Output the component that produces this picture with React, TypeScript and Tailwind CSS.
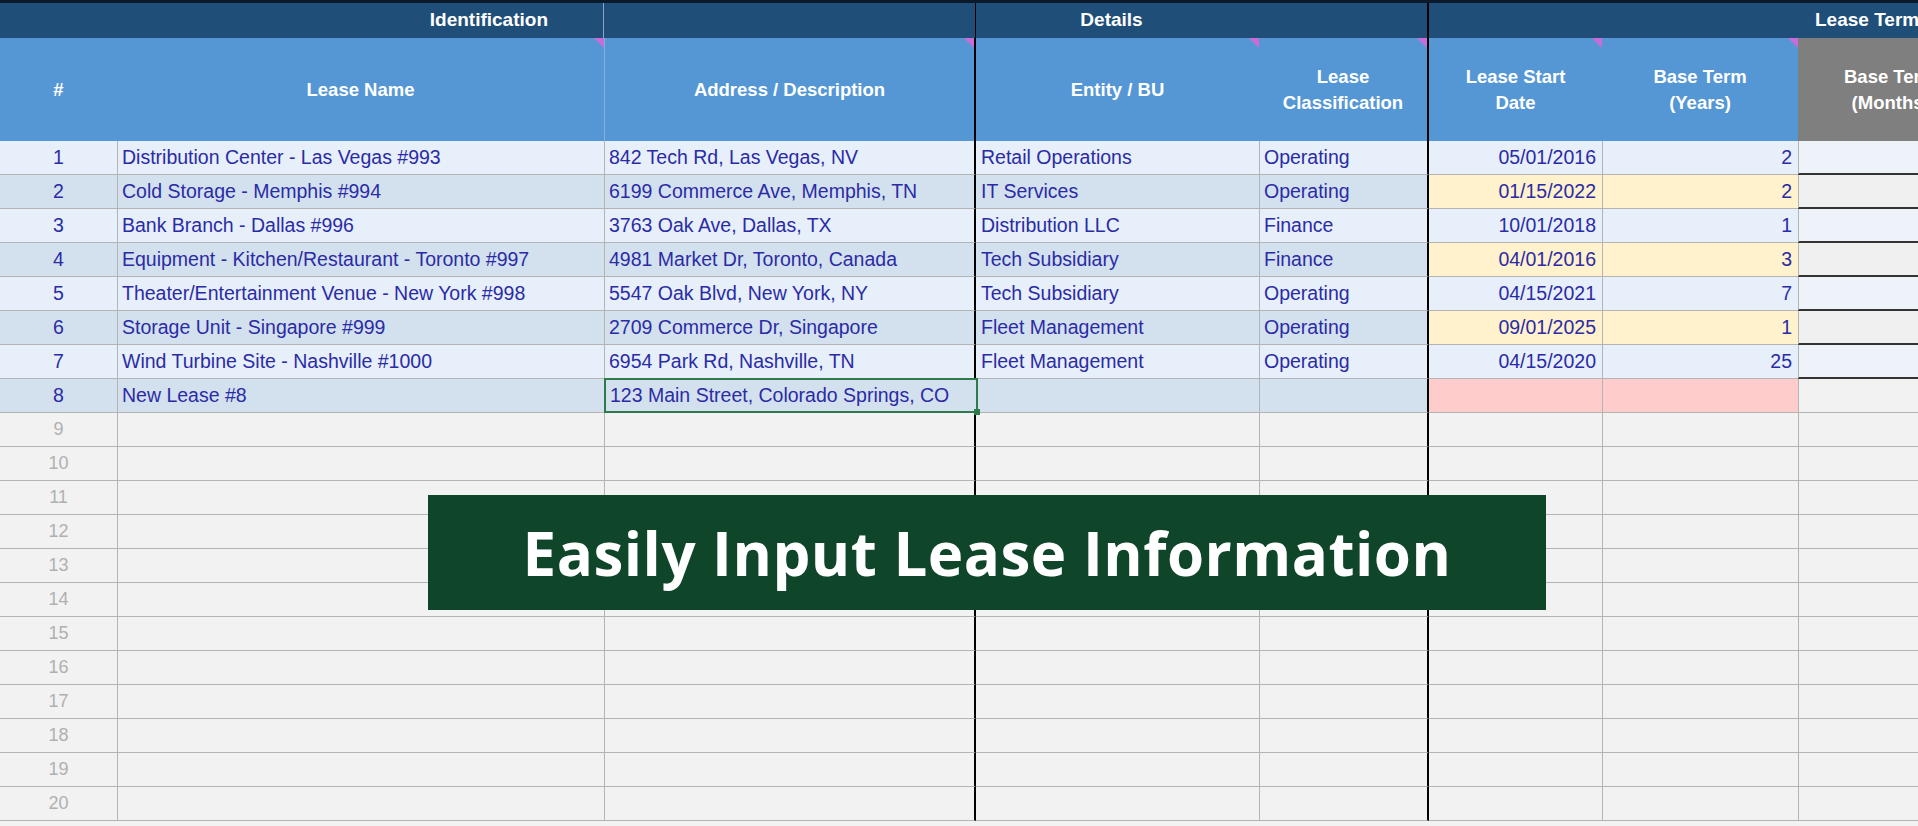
import React from "react";

const cols = "grid-cols-[117px_487px_372px_283px_170px_173px_196px_120px]";
const rows = [
  ["1","Distribution Center - Las Vegas #993","842 Tech Rd, Las Vegas, NV","Retail Operations","Operating","05/01/2016","2"],
  ["2","Cold Storage - Memphis #994","6199 Commerce Ave, Memphis, TN","IT Services","Operating","01/15/2022","2"],
  ["3","Bank Branch - Dallas #996","3763 Oak Ave, Dallas, TX","Distribution LLC","Finance","10/01/2018","1"],
  ["4","Equipment - Kitchen/Restaurant - Toronto #997","4981 Market Dr, Toronto, Canada","Tech Subsidiary","Finance","04/01/2016","3"],
  ["5","Theater/Entertainment Venue - New York #998","5547 Oak Blvd, New York, NY","Tech Subsidiary","Operating","04/15/2021","7"],
  ["6","Storage Unit - Singapore #999","2709 Commerce Dr, Singapore","Fleet Management","Operating","09/01/2025","1"],
  ["7","Wind Turbine Site - Nashville #1000","6954 Park Rd, Nashville, TN","Fleet Management","Operating","04/15/2020","25"],
];

function Tri() {
  return <div className="absolute top-0 right-0 w-0 h-0 border-l-[10px] border-l-transparent border-t-[10px] border-t-[#c86dd7]" />;
}

export default function App() {
  const font = { fontFamily: '"Liberation Sans", Arial, sans-serif' };
  return (
    <div className="w-[1918px] h-[826px] overflow-hidden bg-[#f2f2f2] relative" style={font}>
      <div className={`grid ${cols} h-[38px] bg-[#1f4e79] border-t-[3px] border-t-[#0b1a2a] text-white font-bold text-[19px]`}>
        <div className="col-span-2 flex items-center justify-end pr-[55px] border-r border-[#8aa6c4]">Identification</div>
        <div className="border-r border-black"></div>
        <div className="col-span-2 flex items-center justify-center border-r-2 border-black">
          <span className="-ml-[180px]">Details</span>
        </div>
        <div className="col-span-3 flex items-center pl-[386px] whitespace-nowrap overflow-hidden">Lease Term</div>
      </div>
      <div className={`grid ${cols} h-[103px] bg-[#5597d5] text-white font-bold text-[18.5px] leading-[26px] text-center`}>
        <div className="flex items-center justify-center">#</div>
        <div className="relative flex items-center justify-center">Lease Name<Tri /></div>
        <div className="relative flex items-center justify-center border-r-2 border-black border-l border-l-[#7fb0de]">Address / Description<Tri /></div>
        <div className="relative flex items-center justify-center">Entity / BU<Tri /></div>
        <div className="relative flex items-center justify-center border-r-2 border-black">Lease<br />Classification<Tri /></div>
        <div className="relative flex items-center justify-center">Lease Start<br />Date<Tri /></div>
        <div className="relative flex items-center justify-center">Base Term<br />(Years)<Tri /></div>
        <div className="flex items-center justify-start pl-[46px] bg-[#7f7f7f] whitespace-nowrap overflow-hidden">Base Term<br />(Months)</div>
      </div>
      {Array.from({ length: 20 }).map((_, i) => {
        const r = rows[i];
        const odd = i % 2 === 0;
        const filled = i < 8;
        const bg = filled ? (odd ? "bg-[#e6effa]" : "bg-[#d3e1ef]") : "bg-[#f2f2f2]";
        const dateBg = i < 7 ? (odd ? "bg-[#e6effa]" : "bg-[#fff2cc]") : i === 7 ? "bg-[#ffcccc]" : "bg-[#f2f2f2]";
        const txt = "text-[#2b2ba6] text-[19.5px]";
        const cell = "h-[34px] flex items-center border-b border-[#b4b4b4] whitespace-nowrap";
        return (
          <div key={i} className={`grid ${cols}`}>
            <div className={`${cell} ${bg} justify-center ${filled ? "text-[#2b2ba6] text-[19.5px]" : "text-[#b0b0b0] text-[18px]"}`}>{i + 1}</div>
            <div className={`${cell} ${bg} ${txt} pl-[4px] border-l border-l-[#b4b4b4]`}>{r ? r[1] : i === 7 ? "New Lease #8" : ""}</div>
            <div className={`${cell} ${bg} ${txt} pl-[4px] border-l border-l-[#b4b4b4] border-r-2 border-r-black relative overflow-visible`}>
              {r ? r[2] : ""}
              {i === 7 && (
                <div className="absolute -left-[1px] -top-[1px] w-[374px] h-[35px] border-2 border-[#2d7a4b] flex items-center pl-[4px] bg-[#d3e1ef] z-10">
                  123 Main Street, Colorado Springs, CO
                  <div className="absolute -right-[4px] -bottom-[4px] w-[6px] h-[6px] bg-[#2d7a4b]" />
                </div>
              )}
            </div>
            <div className={`${cell} ${bg} ${txt} pl-[5px]`}>{r ? r[3] : ""}</div>
            <div className={`${cell} ${bg} ${txt} pl-[4px] border-l border-l-[#b4b4b4] border-r-2 border-r-black`}>{r ? r[4] : ""}</div>
            <div className={`${cell} ${dateBg} ${txt} justify-end pr-[6px]`}>{r ? r[5] : ""}</div>
            <div className={`${cell} ${dateBg} ${txt} justify-end pr-[6px] border-l border-l-[#b4b4b4]`}>{r ? r[6] : ""}</div>
            <div className={`${cell} ${i < 7 ? (odd ? "bg-[#eef3f9]" : "bg-[#f0f0f0]") : "bg-[#f2f2f2]"} border-l border-l-[#b4b4b4] ${i < 7 ? "border-b-2 border-b-[#333]" : ""}`}></div>
          </div>
        );
      })}
      <div className="absolute left-[428px] top-[495px] w-[1118px] h-[115px] bg-[#0f4529] flex items-center justify-center">
        <span className="text-white font-bold text-[60px] tracking-[0.5px]" style={{ fontFamily: '"Open Sans", "Noto Sans", sans-serif' }}>
          Easily Input Lease Information
        </span>
      </div>
    </div>
  );
}
